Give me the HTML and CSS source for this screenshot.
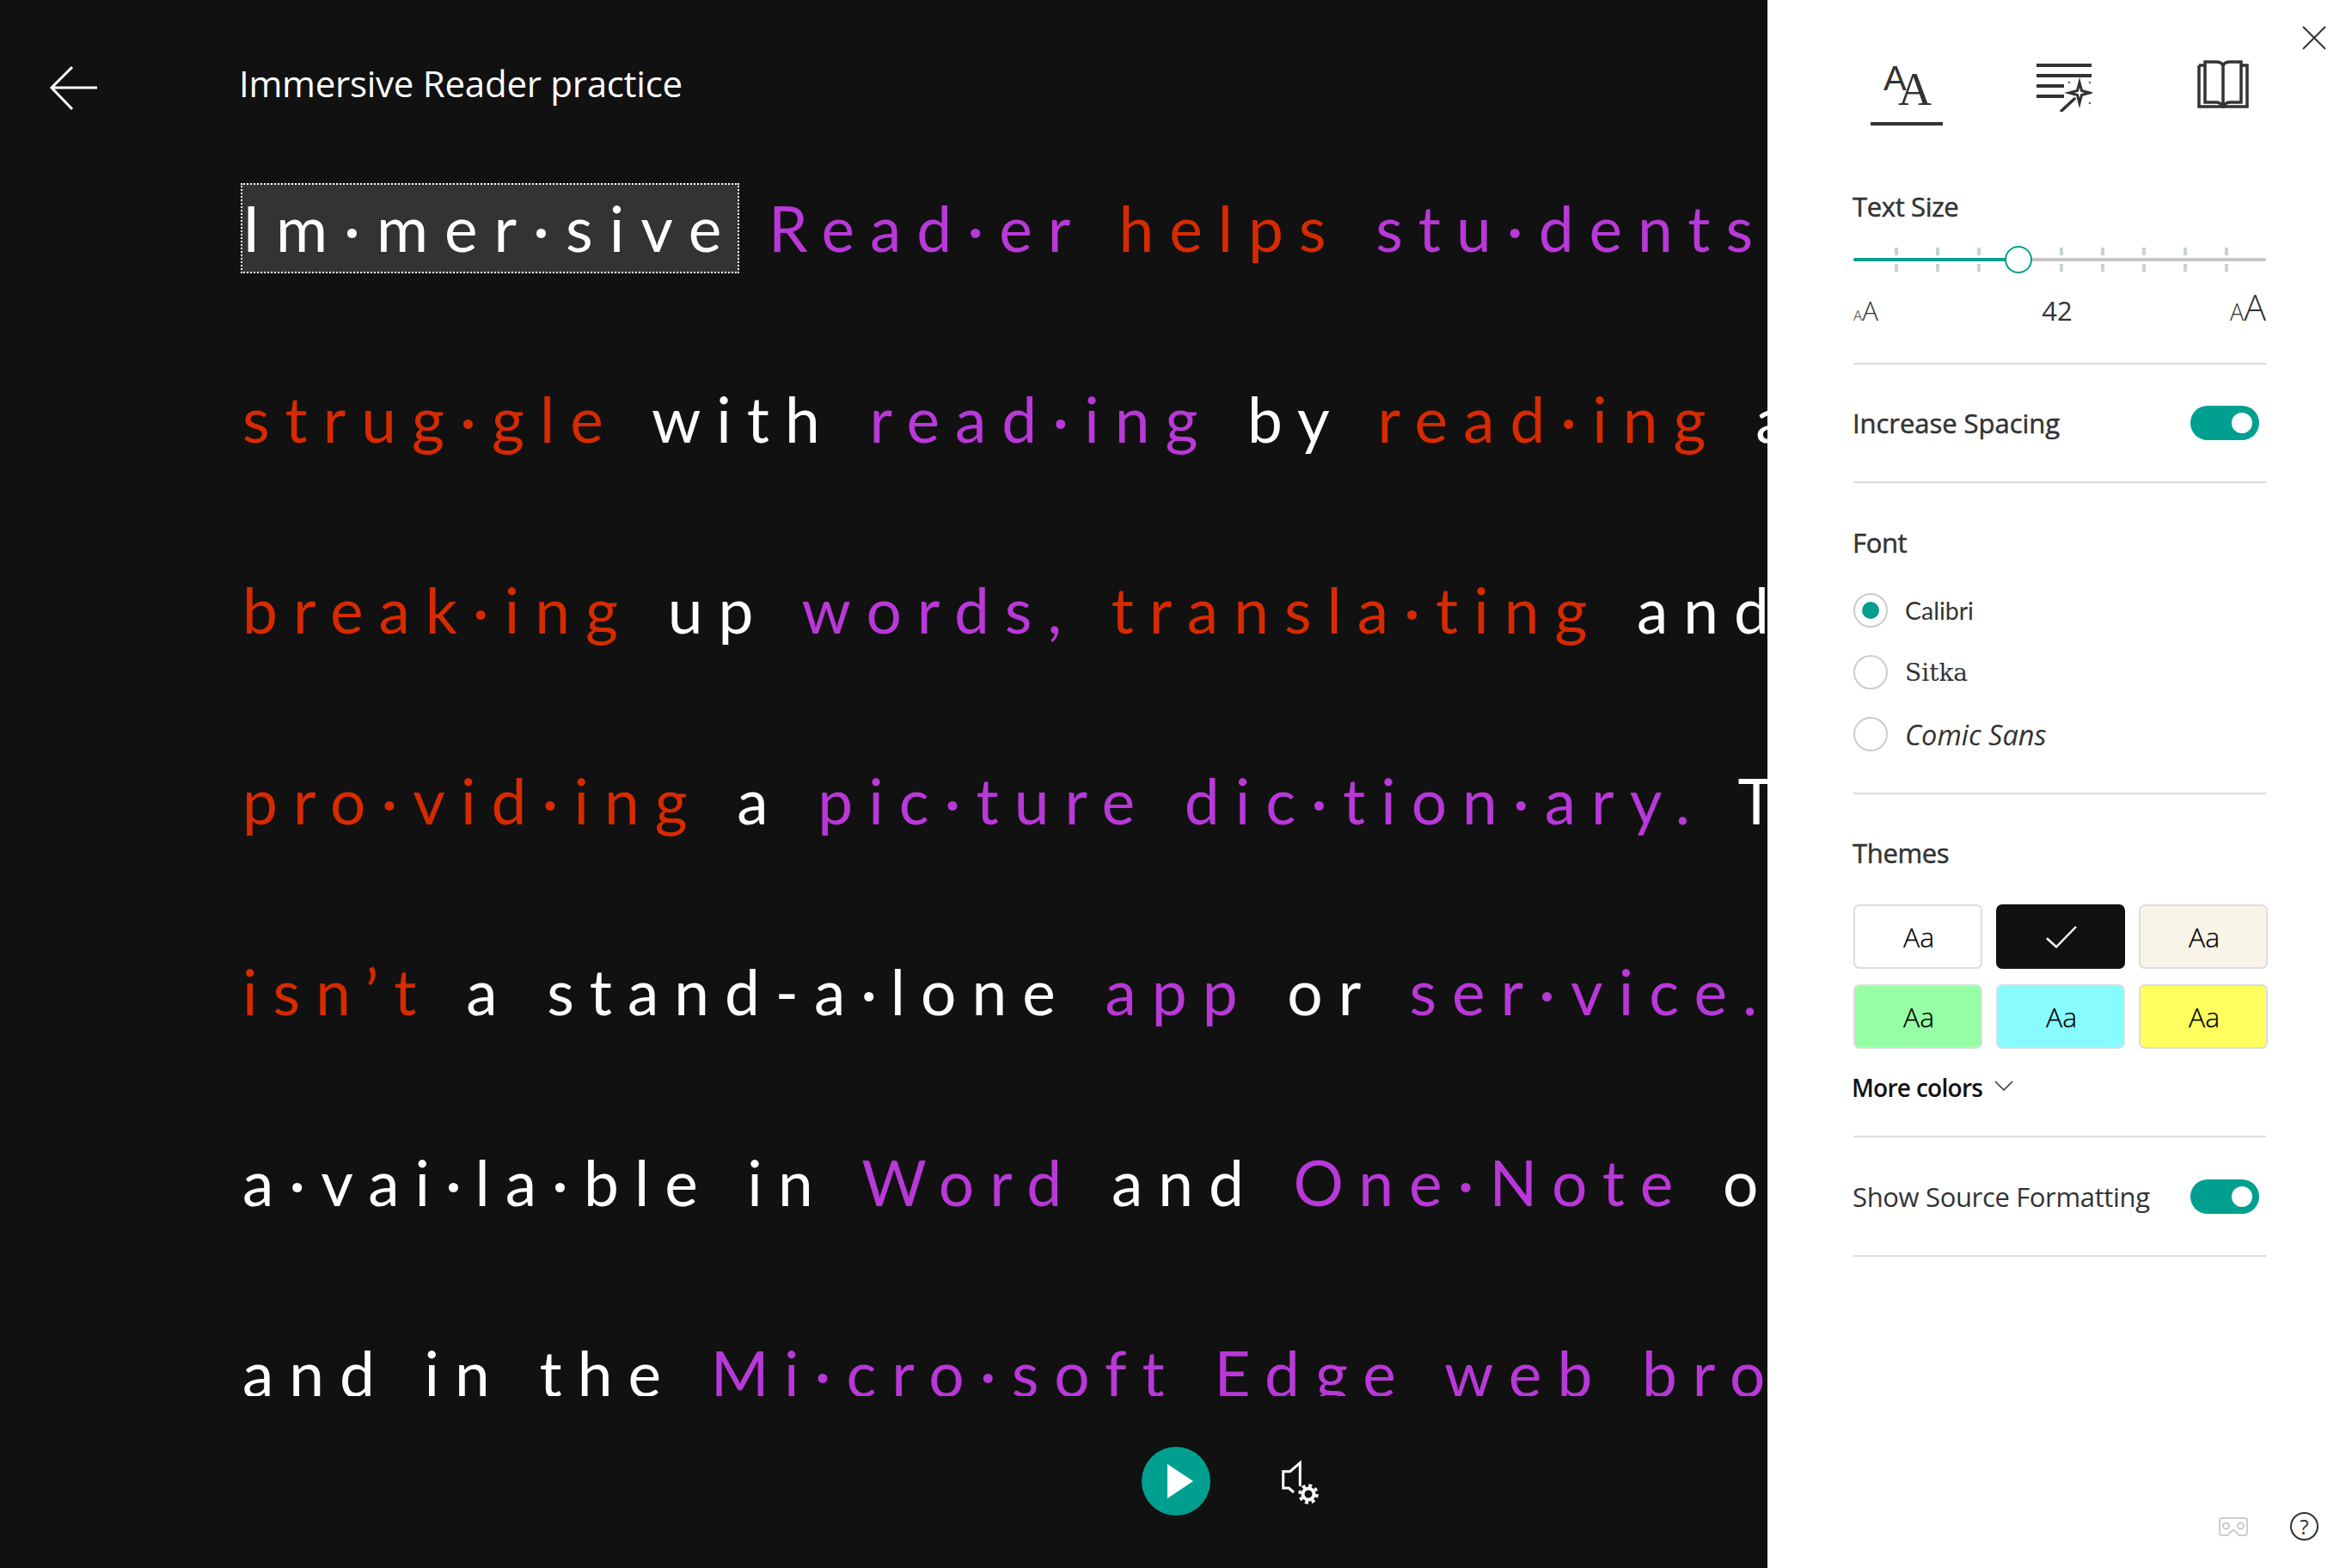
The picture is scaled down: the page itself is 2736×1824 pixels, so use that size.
FILE: index.html
```html
<!DOCTYPE html>
<html lang="en">
<head>
<meta charset="utf-8">
<title>Immersive Reader practice</title>
<link rel="stylesheet" href="styles.css">
</head>
<body>
<div class="app">
  <main class="reader">
    <header class="topbar">
      <svg class="back" width="60" height="56" viewBox="0 0 60 56"><path d="M56 27H3M27 3L3 27L27 52" fill="none" stroke="#fff" stroke-width="3"/></svg>
      <h1 class="title">Immersive Reader practice</h1>
    </header>
    <div class="text">
      <div class="line"><span class="focus">Im·mer·sive</span> <span class="p">Read·er</span> <span class="r">helps</span> <span class="p">stu·dents</span></div>
      <div class="line"><span class="r">strug·gle</span> with <span class="p">read·ing</span> by <span class="r">read·ing</span> a</div>
      <div class="line"><span class="r">break·ing</span> up <span class="p">words,</span> <span class="r">transla·ting</span> and</div>
      <div class="line"><span class="r">pro·vid·ing</span> a <span class="p">pic·ture</span> <span class="p">dic·tion·ary.</span> T</div>
      <div class="line"><span class="r">isn’t</span> a stand-a·lone <span class="p">app</span> or <span class="p">ser·vice.</span></div>
      <div class="line">a·vai·la·ble in <span class="p">Word</span> and <span class="p">One·Note</span> o</div>
      <div class="line">and in the <span class="p">Mi·cro·soft</span> <span class="p">Edge</span> <span class="p">web</span> <span class="p">bro</span></div>
    </div>
    <footer class="controls">
      <button class="play" type="button" aria-label="Play"><svg width="30" height="40" viewBox="0 0 30 40"><path d="M0 0L30 20L0 40Z" fill="#fff"/></svg></button>
      <svg class="voice" width="46" height="54" viewBox="0 0 46 54"><path d="M22.3 31V3.7L10.7 13.7H2.7V33H9.3L15 38" fill="none" stroke="#fff" stroke-width="3"/><circle cx="32" cy="40" r="6.5" fill="none" stroke="#fff" stroke-width="4"/><circle cx="32" cy="40" r="10" fill="none" stroke="#fff" stroke-width="3.5" stroke-dasharray="3.9 3.95"/></svg>
    </footer>
  </main>
  <aside class="panel">
    <button class="close" type="button" aria-label="Close"><svg width="28" height="28" viewBox="0 0 28 28"><path d="M1 1L27 27M27 1L1 27" stroke="#333" stroke-width="2"/></svg></button>
    <nav class="tabs">
      <div class="tab active">
        <svg width="60" height="56" viewBox="0 0 60 56"><text x="3" y="35" class="aa-sans">A</text><text x="20" y="52" class="aa-serif">A</text></svg>
      </div>
      <div class="tab tab-wand">
        <svg width="66" height="60" viewBox="0 0 66 60"><path d="M1 6H65M1 18H65M1 30H33M1 42H33" stroke="#333" stroke-width="4" fill="none"/><path d="M51 26L53.500 35.500L63 38L53.500 40.500L51 50L48.500 40.500L39 38L48.500 35.500Z" fill="none" stroke="#333" stroke-width="3"/><path d="M30 59L45 45" stroke="#333" stroke-width="3.500" stroke-linecap="round"/><circle cx="39" cy="26" r="1.300" fill="#666"/><circle cx="63" cy="26" r="1.300" fill="#666"/><circle cx="63" cy="50" r="1.300" fill="#666"/></svg>
      </div>
      <div class="tab">
        <svg width="60" height="56" viewBox="0 0 60 56"><path d="M2 6V54H58V6H52M2 6H8" fill="none" stroke="#333" stroke-width="3.500"/><path d="M9 49V2H22Q28 2 30 6Q32 2 38 2H51V49H38Q33 49 30 54Q27 49 22 49Z" fill="none" stroke="#333" stroke-width="3.500"/><path d="M30 6V52" stroke="#333" stroke-width="3.500"/></svg>
      </div>
    </nav>
    <section class="section size">
      <h2 class="label">Text Size</h2>
      <div class="slider">
        <div class="track"><div class="fill"></div></div>
        <div class="ticks"><i></i><i></i><i></i><i></i><i></i><i></i><i></i><i></i><i></i></div>
        <div class="thumb"></div>
      </div>
      <div class="scale">
        <span class="sm"><b>A</b><em>A</em></span>
        <span class="value">42</span>
        <span class="lg"><b>A</b><em>A</em></span>
      </div>
    </section>
    <section class="section row">
      <span class="label spacing">Increase Spacing</span>
      <span class="toggle"><i></i></span>
    </section>
    <section class="section font">
      <h2 class="label">Font</h2>
      <div class="radios">
        <div class="radio on"><span class="dot"></span><span class="calibri">Calibri</span></div>
        <div class="radio"><span class="dot"></span><span class="sitka">Sitka</span></div>
        <div class="radio"><span class="dot"></span><span class="comic">Comic Sans</span></div>
      </div>
    </section>
    <section class="section themes">
      <h2 class="label">Themes</h2>
      <div class="grid">
        <div class="swatch white">Aa</div>
        <div class="swatch black"><svg width="36" height="26" viewBox="0 0 36 26"><path d="M1 14.500L12 24.500L35 1" fill="none" stroke="#fff" stroke-width="2.500"/></svg></div>
        <div class="swatch cream">Aa</div>
        <div class="swatch green">Aa</div>
        <div class="swatch cyan">Aa</div>
        <div class="swatch yellow">Aa</div>
      </div>
      <div class="more"><span>More colors</span><svg width="22" height="12" viewBox="0 0 22 12"><path d="M1 1L11 11L21 1" fill="none" stroke="#333" stroke-width="1.500"/></svg></div>
    </section>
    <section class="section row source">
      <span class="label light">Show Source Formatting</span>
      <span class="toggle"><i></i></span>
    </section>
    <footer class="foot">
      <svg width="36" height="24" viewBox="0 0 36 24"><path d="M5 2H31Q34 2 34 5V19Q34 22 31 22H25L20 17Q18 15 16 17L11 22H5Q2 22 2 19V5Q2 2 5 2Z" fill="none" stroke="#ccc" stroke-width="2"/><circle cx="9.500" cy="11" r="3.500" fill="none" stroke="#ccc" stroke-width="2"/><circle cx="26.500" cy="11" r="3.500" fill="none" stroke="#ccc" stroke-width="2"/></svg>
      <span class="help">?</span>
    </footer>
  </aside>
</div>
</body>
</html>
```

FILE: styles.css
```css
* { box-sizing: border-box; }
html, body { margin: 0; padding: 0; }
body { width: 2736px; height: 1824px; overflow: hidden; font-family: "Open Sans", "Noto Sans", sans-serif; }
button { border: 0; background: none; padding: 0; }
svg { display: block; }
.app { display: flex; width: 2736px; height: 1824px; }

.reader { flex: 0 0 2056px; width: 2056px; height: 1824px; background: #111; color: #fff; display: flex; flex-direction: column; overflow: hidden; }
.topbar { flex: 0 0 154px; display: flex; align-items: flex-start; padding: 75px 0 0 57px; }
.back { flex: none; }
.title { margin: -6px 0 0 161px; font-size: 42px; font-weight: 400; line-height: 56px; letter-spacing: -0.25px; }

.text { flex: 0 0 1470px; overflow: hidden; padding-left: 282px; font-family: Lato, "Open Sans", sans-serif; font-size: 73px; letter-spacing: 18px; word-spacing: 3px; }
.line { height: 222px; line-height: 222px; white-space: nowrap; }
.p { color: #b838d8; }
.r { color: #d62a00; }
.focus { display: inline-block; line-height: 105px; background: #333; outline: 2px dotted #fff; outline-offset: -2px; vertical-align: baseline; letter-spacing: 19px; margin: 0 -6px 0 -2px; padding: 0 2px; }

.controls { flex: 1; display: flex; align-items: flex-start; padding: 59px 0 0 1328px; }
.play { width: 80px; height: 80px; border-radius: 50%; background: #009f90; display: flex; align-items: center; justify-content: center; padding-left: 10px; }
.voice { margin: 15px 0 0 82px; }

.panel { position: relative; flex: 0 0 680px; width: 680px; height: 1824px; background: #fff; color: #333; display: flex; flex-direction: column; padding: 0 100px; }
.close { position: absolute; top: 30px; right: 30px; }
.tabs { height: 146px; margin-left: -30px; display: grid; grid-template-columns: repeat(3, 184px); flex: none; }
.tab { display: flex; flex-direction: column; align-items: center; padding-top: 70px; height: 146px; }
.tab.active { width: 84px; justify-self: center; border-bottom: 4px solid #333; }
.tab-wand { padding-right: 2px; }
.aa-sans { font-family: "Liberation Sans", sans-serif; font-size: 40px; fill: #333; }
.aa-serif { font-family: "Liberation Serif", serif; font-size: 54px; fill: #333; }

.section { border-bottom: 2px solid #ddd; flex: none; }
.label { margin: 0 0 0 -1px; font-size: 31px; font-weight: 400; -webkit-text-stroke: 0.5px #333; line-height: 40px; color: #333; letter-spacing: -0.35px; }
.label.spacing { letter-spacing: -0.05px; }
.label.light { -webkit-text-stroke: 0; letter-spacing: -0.35px; }
.size { padding-top: 74px; height: 278px; }
.slider { position: relative; height: 32px; margin-top: 26px; }
.track { position: absolute; left: 0; right: 0; top: 14px; height: 4px; border-radius: 2px; background: #c8c6c4; }
.fill { width: 192px; height: 4px; border-radius: 2px; background: #009f90; }
.ticks { position: absolute; left: 48px; top: 2px; display: flex; gap: 44px; }
.ticks i { width: 4px; height: 28px; background: linear-gradient(#c8d2d2 9px, transparent 9px 19px, #c8d2d2 19px); }
.thumb { position: absolute; left: 176px; top: 0; width: 32px; height: 32px; border-radius: 50%; background: #fff; border: 2.500px solid #009f90; }
.scale { display: flex; justify-content: space-between; align-items: baseline; height: 48px; margin-top: 17px; line-height: 48px; font-weight: 300; }
.scale b, .scale em { font-weight: 300; font-style: normal; line-height: 1; }
.value { font-size: 31px; font-weight: 400; margin-left: 7px; }
.sm b { font-size: 17px; }
.sm em { font-size: 31px; }
.lg b { font-size: 27px; }
.lg em { font-size: 43px; }

.row { display: flex; justify-content: space-between; align-items: center; height: 138px; padding-right: 8px; }
.row.source { height: 139px; }
.toggle { flex: none; width: 80px; height: 40px; border-radius: 20px; background: #009f90; display: flex; align-items: center; justify-content: flex-end; padding-right: 8px; }
.toggle i { width: 24px; height: 24px; border-radius: 50%; background: #fff; }

.font { padding-top: 49px; height: 362px; }
.radios { margin-top: 23px; }
.radio { display: flex; align-items: center; gap: 20px; height: 72px; }
.dot { flex: none; width: 40px; height: 40px; border-radius: 50%; border: 2px solid #ccc; display: flex; align-items: center; justify-content: center; }
.on .dot::after { content: ""; width: 20px; height: 20px; border-radius: 50%; background: #009f90; }
.calibri { font-family: Lato, sans-serif; font-size: 28.500px; }
.sitka { font-family: "DejaVu Serif", serif; font-size: 28px; }
.comic { font-family: "Open Sans", sans-serif; font-style: italic; font-size: 32.500px; }

.themes { padding-top: 48px; height: 399px; }
.grid { display: grid; grid-template-columns: repeat(3, 150px); column-gap: 16px; grid-auto-rows: 75px; row-gap: 18px; margin-top: 40px; }
.swatch { display: flex; align-items: center; justify-content: center; padding-left: 2px; border: 2px solid #ddd; border-radius: 7px; font-family: "Open Sans", sans-serif; font-size: 32px; font-weight: 300; -webkit-text-stroke: 0.25px #000; color: #000; }
.white { background: #fff; }
.black { background: #111; border-color: #111; }
.cream { background: #f8f4e8; }
.green { background: #96ffa5; }
.cyan { background: #88fbff; }
.yellow { background: #ffff5e; }
.more { display: flex; align-items: center; gap: 14px; margin: 25px 0 0 -2px; height: 40px; font-size: 28px; font-weight: 600; line-height: 40px; color: #111; letter-spacing: -0.7px; }
.more svg { margin-top: -4px; }

.foot { margin: auto -61px 32px 0; display: flex; align-items: center; justify-content: flex-end; gap: 48px; }
.help { width: 33px; height: 33px; border-radius: 50%; border: 2px solid #333; display: flex; align-items: center; justify-content: center; font-size: 24px; line-height: 1; color: #333; }
```
